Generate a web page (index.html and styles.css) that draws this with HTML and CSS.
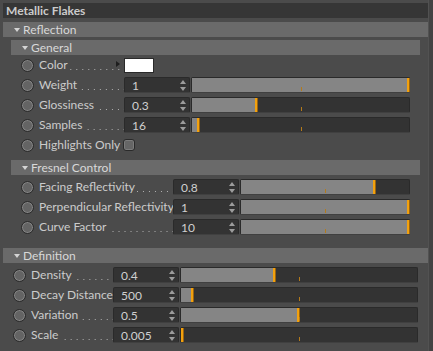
FILE: index.html
```html
<!DOCTYPE html>
<html lang="en">
<head>
  <meta charset="UTF-8" />
  <meta name="viewport" content="width=device-width, initial-scale=1.0"/>
  <title>Metallic Flakes</title>
  <link rel="stylesheet" href="styles.css">
</head>
<body>

  <div class="window">
    <div class="main">
      <div class="title">Metallic Flakes</div>

      <div class="group reflection">
        <div class="group-head"><span class="arrow"></span>Reflection</div>

        <div class="group sub general">
          <div class="group-head"><span class="arrow"></span>General</div>
          <div class="rows">
            <div class="row">
              <span class="radio"></span>
              <span class="label"><span class="text">Color</span><span class="dots"></span></span>
              <span class="color-arrow"></span>
              <span class="swatch"></span>
            </div>
            <div class="row">
              <span class="radio"></span>
              <span class="label"><span class="text">Weight</span><span class="dots"></span></span>
              <span class="field"><span class="value">1</span><svg class="spin" width="6" height="11" viewBox="0 0 6 11"><path d="M3 0L6 4H0Z M3 11L6 7H0Z" fill="#9c9c9c"/></svg></span>
              <span class="slider"><span class="fill" style="width: 100%"></span><span class="tick"></span></span>
            </div>
            <div class="row">
              <span class="radio"></span>
              <span class="label"><span class="text">Glossiness</span><span class="dots"></span></span>
              <span class="field"><span class="value">0.3</span><svg class="spin" width="6" height="11" viewBox="0 0 6 11"><path d="M3 0L6 4H0Z M3 11L6 7H0Z" fill="#9c9c9c"/></svg></span>
              <span class="slider"><span class="fill" style="width: 30%"></span><span class="tick"></span></span>
            </div>
            <div class="row">
              <span class="radio"></span>
              <span class="label"><span class="text">Samples</span><span class="dots"></span></span>
              <span class="field"><span class="value">16</span><svg class="spin" width="6" height="11" viewBox="0 0 6 11"><path d="M3 0L6 4H0Z M3 11L6 7H0Z" fill="#9c9c9c"/></svg></span>
              <span class="slider"><span class="fill" style="width: 3%"></span><span class="tick"></span></span>
            </div>
            <div class="row">
              <span class="radio"></span>
              <span class="label"><span class="text">Highlights Only</span></span>
              <span class="checkbox"></span>
            </div>
          </div>
        </div>

        <div class="group sub fresnel">
          <div class="group-head"><span class="arrow"></span>Fresnel Control</div>
          <div class="rows">
            <div class="row">
              <span class="radio"></span>
              <span class="label"><span class="text">Facing Reflectivity</span><span class="dots"></span></span>
              <span class="field"><span class="value">0.8</span><svg class="spin" width="6" height="11" viewBox="0 0 6 11"><path d="M3 0L6 4H0Z M3 11L6 7H0Z" fill="#9c9c9c"/></svg></span>
              <span class="slider"><span class="fill" style="width: 80%"></span><span class="tick"></span></span>
            </div>
            <div class="row">
              <span class="radio"></span>
              <span class="label"><span class="text">Perpendicular Reflectivity</span></span>
              <span class="field"><span class="value">1</span><svg class="spin" width="6" height="11" viewBox="0 0 6 11"><path d="M3 0L6 4H0Z M3 11L6 7H0Z" fill="#9c9c9c"/></svg></span>
              <span class="slider"><span class="fill" style="width: 100%"></span><span class="tick"></span></span>
            </div>
            <div class="row">
              <span class="radio"></span>
              <span class="label"><span class="text">Curve Factor</span><span class="dots"></span></span>
              <span class="field"><span class="value">10</span><svg class="spin" width="6" height="11" viewBox="0 0 6 11"><path d="M3 0L6 4H0Z M3 11L6 7H0Z" fill="#9c9c9c"/></svg></span>
              <span class="slider"><span class="fill" style="width: 100%"></span><span class="tick"></span></span>
            </div>
          </div>
        </div>
      </div>

      <div class="group definition">
        <div class="group-head"><span class="arrow"></span>Definition</div>
        <div class="rows">
          <div class="row">
            <span class="radio"></span>
            <span class="label"><span class="text">Density</span><span class="dots"></span></span>
            <span class="field"><span class="value">0.4</span><svg class="spin" width="6" height="11" viewBox="0 0 6 11"><path d="M3 0L6 4H0Z M3 11L6 7H0Z" fill="#9c9c9c"/></svg></span>
            <span class="slider"><span class="fill" style="width: 40%"></span><span class="tick"></span></span>
          </div>
          <div class="row">
            <span class="radio"></span>
            <span class="label"><span class="text">Decay Distance</span></span>
            <span class="field"><span class="value">500</span><svg class="spin" width="6" height="11" viewBox="0 0 6 11"><path d="M3 0L6 4H0Z M3 11L6 7H0Z" fill="#9c9c9c"/></svg></span>
            <span class="slider"><span class="fill" style="width: 5%"></span><span class="tick"></span></span>
          </div>
          <div class="row">
            <span class="radio"></span>
            <span class="label"><span class="text">Variation</span><span class="dots"></span></span>
            <span class="field"><span class="value">0.5</span><svg class="spin" width="6" height="11" viewBox="0 0 6 11"><path d="M3 0L6 4H0Z M3 11L6 7H0Z" fill="#9c9c9c"/></svg></span>
            <span class="slider"><span class="fill" style="width: 50%"></span><span class="tick"></span></span>
          </div>
          <div class="row">
            <span class="radio"></span>
            <span class="label"><span class="text">Scale</span><span class="dots"></span></span>
            <span class="field"><span class="value">0.005</span><svg class="spin" width="6" height="11" viewBox="0 0 6 11"><path d="M3 0L6 4H0Z M3 11L6 7H0Z" fill="#9c9c9c"/></svg></span>
            <span class="slider"><span class="fill" style="width: 0.5%"></span><span class="tick"></span></span>
          </div>
        </div>
      </div>
    </div>
    <div class="scrollbar"></div>
  </div>

</body>
</html>
```

FILE: styles.css
```css
body {
  margin: 0;
  padding: 0;
  font-family: "Lato", "Liberation Sans", sans-serif;
  font-size: 12px;
  background-color: #4b4b4b;
  color: #cbcbcb;
}

.window {
  display: flex;
  height: 351px;
}

.main {
  flex: 1;
  padding: 3px 0 0 3px;
}

.scrollbar {
  width: 4px;
  border-left: 1px solid #525252;
  background-color: #434343;
}

.title {
  height: 15px;
  line-height: 15px;
  padding-left: 3px;
  background-color: #363636;
  font-weight: bold;
  color: #cbcbcb;
  margin-bottom: 4px;
}

.group-head {
  height: 15px;
  line-height: 15px;
  padding-left: 11px;
  background-color: #6a6a6a;
  color: #d8d8d8;
  display: flex;
  align-items: center;
}

.arrow {
  width: 0;
  height: 0;
  border-left: 3.5px solid transparent;
  border-right: 3.5px solid transparent;
  border-top: 4px solid #d4d4d4;
  margin-right: 3px;
}

.sub {
  margin: 3px 8px 0;
}

.fresnel {
  margin-top: 7px;
}

.definition {
  margin-top: 13px;
}

.rows {
  display: flex;
  flex-direction: column;
  gap: 4px;
  padding: 4px 10px 0;
}

.general .rows {
  padding-top: 2px;
}

.row {
  display: flex;
  align-items: center;
  height: 16px;
}

.radio {
  width: 11px;
  height: 11px;
  border-radius: 50%;
  border: 1px solid #2a2a2a;
  background-color: #646464;
  box-shadow: inset 0 0 0 1px #848484;
  margin-right: 5px;
  flex-shrink: 0;
}

.label {
  display: flex;
  height: 16px;
  line-height: 16px;
  white-space: nowrap;
  flex-shrink: 0;
}

.general .label {
  width: 85px;
}

.fresnel .label {
  width: 134px;
}

.definition .label {
  width: 82px;
}

.dots {
  flex: 1;
  margin-left: 2px;
  background-image: linear-gradient(to right, #b0b0b0 1px, transparent 1px);
  background-size: 6px 1px;
  background-repeat: repeat-x;
  background-position: right 0 bottom 3px;
}

.color-arrow {
  width: 0;
  height: 0;
  border-top: 3px solid transparent;
  border-bottom: 3px solid transparent;
  border-left: 4px solid #1e1e1e;
  margin: 0 4px 2px -8px;
}

.swatch {
  width: 28px;
  height: 13px;
  background-color: #fff;
  border: 1px solid #2a2a2a;
}

.checkbox {
  width: 10px;
  height: 10px;
  border: 1px solid #2a2a2a;
  border-radius: 3px;
  background-color: #666;
  box-shadow: inset 0 0 0 1px #7c7c7c;
  margin-left: -1px;
}

.field {
  width: 66px;
  height: 16px;
  box-sizing: border-box;
  border: 1px solid #2a2a2a;
  border-bottom-color: #404040;
  border-radius: 2px;
  background-color: #333;
  color: #d0d0d0;
  display: flex;
  align-items: center;
  justify-content: space-between;
  padding: 0 3px 0 7px;
  flex-shrink: 0;
}

.spin {
  display: block;
}

.slider {
  flex: 1;
  height: 16px;
  box-sizing: border-box;
  margin-left: 1px;
  border: 1px solid #2a2a2a;
  border-bottom-color: #404040;
  border-radius: 2px;
  background-color: #333;
  position: relative;
  display: flex;
}

.fill {
  height: 100%;
  box-sizing: border-box;
  background-color: #858585;
  border-right: 2px solid #f2a10e;
  box-shadow: 1px 0 0 #9a6410;
}

.tick {
  position: absolute;
  left: 50%;
  bottom: 1px;
  width: 1px;
  height: 4px;
  background-color: #b47a1a;
}
```
